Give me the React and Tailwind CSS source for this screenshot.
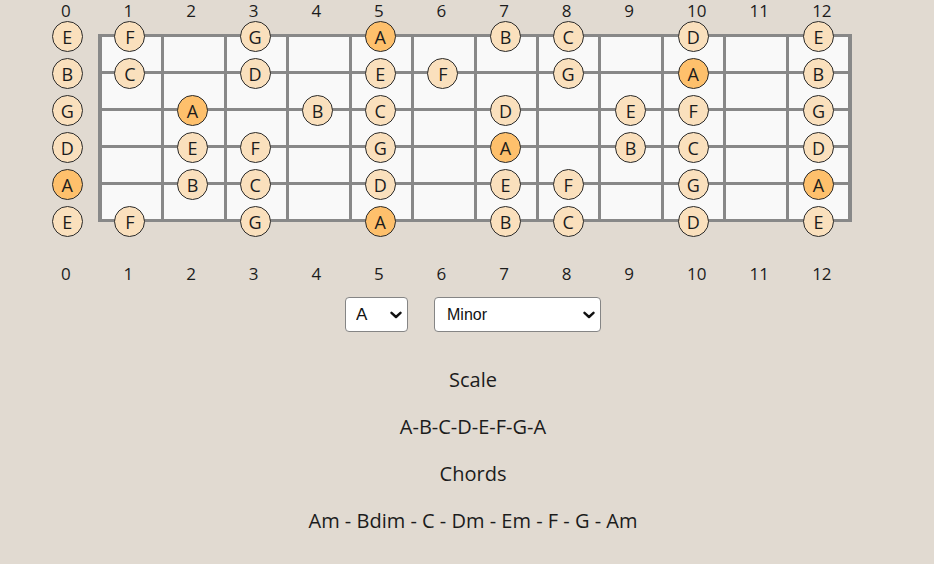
import React from "react";

const STRINGS = [
  { open: "E", notes: { 1: "F", 3: "G", 5: "A", 7: "B", 8: "C", 10: "D", 12: "E" } },
  { open: "B", notes: { 1: "C", 3: "D", 5: "E", 6: "F", 8: "G", 10: "A", 12: "B" } },
  { open: "G", notes: { 2: "A", 4: "B", 5: "C", 7: "D", 9: "E", 10: "F", 12: "G" } },
  { open: "D", notes: { 2: "E", 3: "F", 5: "G", 7: "A", 9: "B", 10: "C", 12: "D" } },
  { open: "A", notes: { 2: "B", 3: "C", 5: "D", 7: "E", 8: "F", 10: "G", 12: "A" } },
  { open: "E", notes: { 1: "F", 3: "G", 5: "A", 7: "B", 8: "C", 10: "D", 12: "E" } },
];

const FRETS = Array.from({ length: 13 }, (_, i) => i);

function NumberRow({ className = "" }) {
  return (
    <div className={"grid grid-cols-[repeat(13,62.6px)] h-[22px] " + className}>
      {FRETS.map((n) => (
        <div key={n} className="pl-[25px] text-[17px] leading-[22px]">
          {n}
        </div>
      ))}
    </div>
  );
}

function Note({ name }) {
  const root = name === "A";
  return (
    <div
      className={
        "w-[31px] h-[31px] rounded-full border border-[#2a2a2a] flex items-center justify-center text-[18px] leading-none " +
        (root ? "bg-[#fec06c]" : "bg-[#fae0bd]")
      }
    >
      <span className="mt-[1px]">{name}</span>
    </div>
  );
}

function Chevron() {
  return (
    <svg
      className="pointer-events-none absolute right-[6px] top-1/2 -translate-y-1/2"
      width="12"
      height="8"
      viewBox="0 0 12 8"
      fill="none"
    >
      <path d="M1.5 1.8 L6 6 L10.5 1.8" stroke="#111" strokeWidth="2.4" strokeLinecap="round" strokeLinejoin="round" />
    </svg>
  );
}

export default function App() {
  return (
    <div className="min-h-[564px] bg-[#e1dad1] text-[#1c1c1c] font-['Open_Sans','Noto_Sans',sans-serif]">
      <div className="pl-[36px]">
        <NumberRow />
        <div className="relative mt-[12px] h-[188px]">
          <div className="ml-[62px] w-[754px] h-[188px] grid grid-cols-12 grid-rows-5 gap-[3px] bg-[#888888] px-[4px] py-[3px]">
            {Array.from({ length: 60 }, (_, i) => (
              <div key={i} className="bg-[#f9f9f9]" />
            ))}
          </div>
          <div className="absolute left-0 top-[-16px] flex flex-col">
            {STRINGS.map((s, si) => (
              <div key={si} className="grid grid-cols-[repeat(13,62.6px)] h-[37px] items-center justify-items-center">
                {FRETS.map((f) => {
                  const name = f === 0 ? s.open : s.notes[f];
                  return <div key={f} className="flex items-center justify-center">{name ? <Note name={name} /> : null}</div>;
                })}
              </div>
            ))}
          </div>
        </div>
        <NumberRow className="mt-[41px]" />
      </div>

      <div className="pl-[12px] mt-[12px] flex justify-center gap-[26px]">
        <div className="relative">
          <select
            defaultValue="A"
            className="appearance-none w-[63px] h-[35px] bg-white border border-[#858585] rounded-[4px] pl-[10px] text-[17px] text-[#111] font-['Liberation_Sans',Arial,sans-serif] outline-none"
          >
            {["A", "A#", "B", "C", "C#", "D", "D#", "E", "F", "F#", "G", "G#"].map((k) => (
              <option key={k} value={k}>{k}</option>
            ))}
          </select>
          <Chevron />
        </div>
        <div className="relative">
          <select
            defaultValue="Minor"
            className="appearance-none w-[167px] h-[35px] bg-white border border-[#858585] rounded-[4px] pl-[12px] text-[16px] text-[#111] font-['Liberation_Sans',Arial,sans-serif] outline-none"
          >
            {["Major", "Minor", "Dorian", "Phrygian", "Lydian", "Mixolydian", "Locrian"].map((k) => (
              <option key={k} value={k}>{k}</option>
            ))}
          </select>
          <Chevron />
        </div>
      </div>

      <div className="pl-[12px] mt-[34px] flex flex-col items-center gap-[20px] text-[20px] leading-[27px]">
        <p>Scale</p>
        <p>A-B-C-D-E-F-G-A</p>
        <p>Chords</p>
        <p>Am - Bdim - C - Dm - Em - F - G - Am</p>
      </div>
    </div>
  );
}
